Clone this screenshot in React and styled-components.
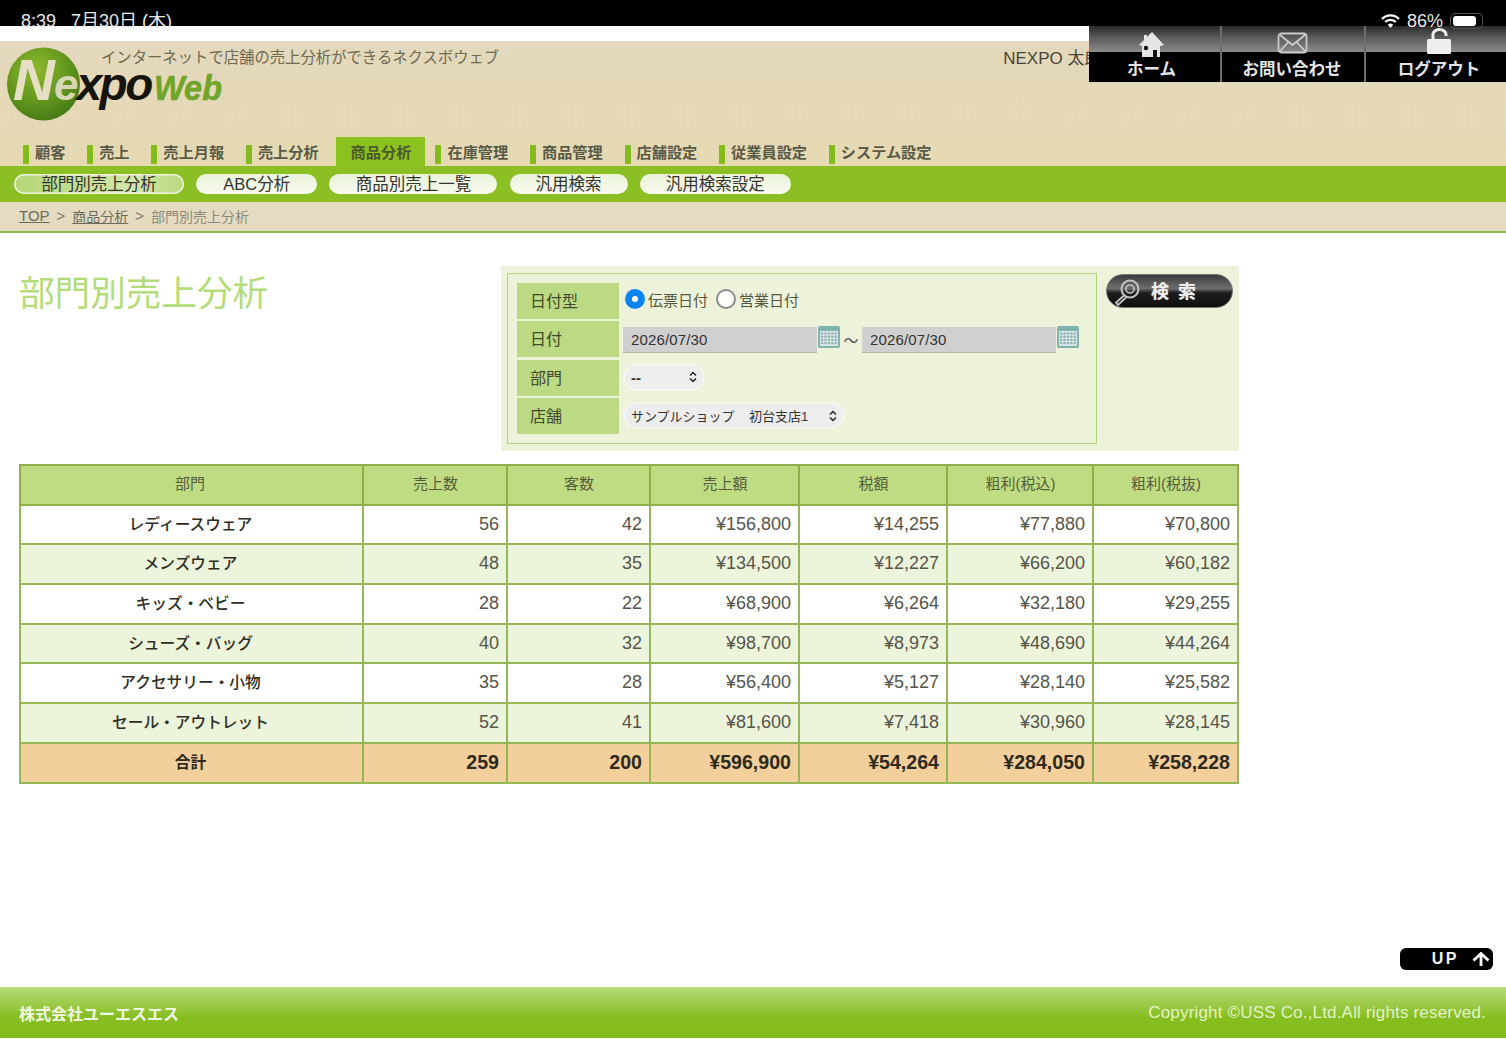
import React from 'react'
import styled, { createGlobalStyle } from 'styled-components'

const GlobalStyle = createGlobalStyle`
html, body {
    margin: 0;
    padding: 0;
    background: #fff;
}
* {
    box-sizing: border-box;
}
body {
    font-family: "Liberation Sans", "Noto Sans CJK JP", sans-serif;
    color: #333;
}
`;

const tabs = ['顧客', '売上', '売上月報', '売上分析', '商品分析', '在庫管理', '商品管理', '店舗設定', '従業員設定', 'システム設定'];
const subTabs = [
    { label: '部門別売上分析', width: 170 },
    { label: 'ABC分析', width: 121 },
    { label: '商品別売上一覧', width: 168 },
    { label: '汎用検索', width: 118 },
    { label: '汎用検索設定', width: 151 },
];
const columns = ['部門', '売上数', '客数', '売上額', '税額', '粗利(税込)', '粗利(税抜)'];
const widths = [343, 144, 143, 149, 148, 146, 145];
const rows = [
    ['レディースウェア', '56', '42', '¥156,800', '¥14,255', '¥77,880', '¥70,800'],
    ['メンズウェア', '48', '35', '¥134,500', '¥12,227', '¥66,200', '¥60,182'],
    ['キッズ・ベビー', '28', '22', '¥68,900', '¥6,264', '¥32,180', '¥29,255'],
    ['シューズ・バッグ', '40', '32', '¥98,700', '¥8,973', '¥48,690', '¥44,264'],
    ['アクセサリー・小物', '35', '28', '¥56,400', '¥5,127', '¥28,140', '¥25,582'],
    ['セール・アウトレット', '52', '41', '¥81,600', '¥7,418', '¥30,960', '¥28,145'],
];
const total = ['合計', '259', '200', '¥596,900', '¥54,264', '¥284,050', '¥258,228'];

const HomeIcon = () => (
    <svg width="27" height="25" viewBox="0 0 27 25">
        <path d="M14 0 L26 13 L23 14 L22 14 L22 25 L4 25 L4 14 L1 13 L6 8 L6 3 L9 3 L9 5 Z" fill="#e6e6e6" />
        <circle cx="8" cy="16" r="2.2" fill="#111" />
        <rect x="15" y="18" width="4" height="7" fill="#111" />
    </svg>
);

const MailIcon = () => (
    <svg width="31" height="22" viewBox="0 0 31 22" fill="none" stroke="#ccc" strokeWidth="1.8">
        <rect x="1.5" y="1.5" width="28" height="19" rx="3" />
        <path d="M3 3 L15.5 13 L28 3 M3 19 L11.5 10 M28 19 L19.5 10" />
    </svg>
);

const LockIcon = () => (
    <svg width="26" height="26" viewBox="0 0 26 26">
        <path d="M7 12 V6.5 A6.5 5 0 0 1 20 6.5 V8" fill="none" stroke="#eee" strokeWidth="3" />
        <rect x="1" y="11" width="24" height="15" rx="1.5" fill="#efefef" />
    </svg>
);

const LensIcon = () => (
    <svg width="26" height="27" viewBox="0 0 26 27" fill="none" stroke="#c4c4c4">
        <circle cx="16" cy="10" r="8.5" strokeWidth="2" />
        <circle cx="16" cy="10" r="4" strokeWidth="1.6" />
        <path d="M10 16.5 L2 23.5 L4 26 L12 18.5" strokeWidth="1.8" />
    </svg>
);

const CalendarIcon = () => (
    <svg width="24" height="24" viewBox="0 0 24 24">
        <rect x="1" y="1" width="22" height="22" rx="2" fill="#7fb3ae" />
        <rect x="3" y="6" width="18" height="15" fill="#d9e6e4" />
        {[0, 1, 2, 3].map((r) =>
            [0, 1, 2, 3, 4].map((c) => (
                <rect key={`${r}-${c}`} x={4 + c * 3.4} y={7.5 + r * 3.2} width="2.2" height="2" fill="#86aeb0" />
            ))
        )}
    </svg>
);

const UpDownIcon = () => (
    <svg width="8" height="12" viewBox="0 0 8 12" fill="none" stroke="#222" strokeWidth="1.5">
        <path d="M1 4.5 L4 1.5 L7 4.5 M1 7.5 L4 10.5 L7 7.5" />
    </svg>
);

const UpArrowIcon = () => (
    <svg width="18" height="14" viewBox="0 0 18 14" fill="none" stroke="#fff" strokeWidth="2.8">
        <path d="M1.5 8.5 L9 1.5 L16.5 8.5 M9 2 V14" />
    </svg>
);

const WifiIcon = () => (
    <svg width="19" height="14" viewBox="0 0 19 14">
        <path d="M1 5 A12 12 0 0 1 18 5" fill="none" stroke="#fff" strokeWidth="2.2" />
        <path d="M4.2 8 A7.5 7.5 0 0 1 14.8 8" fill="none" stroke="#fff" strokeWidth="2.2" />
        <path d="M9.5 14 L6.8 10.8 A4 4 0 0 1 12.2 10.8 Z" fill="#fff" />
    </svg>
);

const Logo = () => (
    <svg width="230" height="80" viewBox="0 0 230 80">
        <defs>
            <radialGradient id="ball" cx="0.4" cy="0.3" r="0.8">
                <stop offset="0" stopColor="#8db92c" />
                <stop offset="0.6" stopColor="#5f921c" />
                <stop offset="1" stopColor="#3f7414" />
            </radialGradient>
        </defs>
        <circle cx="43.5" cy="43" r="36.5" fill="url(#ball)" />
        <text x="13" y="59" fontFamily="Liberation Sans" fontStyle="italic" fontWeight="700">
            <tspan fontSize="58" fill="#e6dfc4">N</tspan>
            <tspan fontSize="44" fill="#d8d6b4" dx="-1">e</tspan>
            <tspan fontSize="46" fill="#15150e" dx="-2" letterSpacing="-2.4">xpo</tspan>
        </text>
        <text x="154" y="59" fontFamily="Liberation Sans" fontStyle="italic" fontWeight="700" fontSize="35" fill="#6fa52a" stroke="#6fa52a" strokeWidth="0.6" textLength="68" lengthAdjust="spacingAndGlyphs">Web</text>
    </svg>
);

const App = () => {
    return (
        <Page>
            <GlobalStyle />
            <StatusBar>
                <span>8:39&nbsp;&nbsp;&nbsp;7月30日 (木)</span>
                <StatusRight>
                    <WifiIcon />
                    <span>86%</span>
                    <Battery><i /></Battery>
                </StatusRight>
            </StatusBar>
            <TopStrip />
            <Header>
                <TopMenu>
                    <MenuItem $w={133} $iconTop={6} $shift={-3}><HomeIcon /><b>ホーム</b></MenuItem>
                    <MenuItem $w={144} $iconTop={6} $shift={-1}><MailIcon /><b>お問い合わせ</b></MenuItem>
                    <MenuItem $w={140} $iconTop={2} $shift={3}><LockIcon /><b>ログアウト</b></MenuItem>
                </TopMenu>
                <Brand>
                    <LogoBox><Logo /></LogoBox>
                    <Tagline>インターネットで店舗の売上分析ができるネクスボウェブ</Tagline>
                    <UserName>NEXPO 太郎</UserName>
                </Brand>
                <Tabs>
                    {tabs.map((tab) => (
                        <Tab key={tab} $active={tab === '商品分析'}>{tab}</Tab>
                    ))}
                </Tabs>
            </Header>
            <SubNav>
                {subTabs.map((tab, index) => (
                    <SubTab key={tab.label} $w={tab.width} $active={index === 0}>{tab.label}</SubTab>
                ))}
            </SubNav>
            <Breadcrumb>
                <a>TOP</a>
                <Sep>&gt;</Sep>
                <a className="small">商品分析</a>
                <Sep>&gt;</Sep>
                <span>部門別売上分析</span>
            </Breadcrumb>
            <Main>
                <TopRow>
                    <Title>部門別売上分析</Title>
                    <SearchPanel>
                        <SearchBox>
                            <FormRow>
                                <FormLabel>日付型</FormLabel>
                                <FormValue>
                                    <Radio $checked />
                                    <RadioText>伝票日付</RadioText>
                                    <Radio />
                                    <RadioText>営業日付</RadioText>
                                </FormValue>
                            </FormRow>
                            <FormRow>
                                <FormLabel>日付</FormLabel>
                                <FormValue>
                                    <DateInput readOnly value="2026/07/30" />
                                    <CalendarBtn><CalendarIcon /></CalendarBtn>
                                    <Tilde>〜</Tilde>
                                    <DateInput readOnly value="2026/07/30" />
                                    <CalendarBtn><CalendarIcon /></CalendarBtn>
                                </FormValue>
                            </FormRow>
                            <FormRow>
                                <FormLabel>部門</FormLabel>
                                <FormValue>
                                    <SelectBox $w={78}><DashText>--</DashText><UpDownIcon /></SelectBox>
                                </FormValue>
                            </FormRow>
                            <FormRow>
                                <FormLabel>店舗</FormLabel>
                                <FormValue>
                                    <SelectBox $w={218}><span>サンプルショップ&nbsp;&nbsp;&nbsp;&nbsp;初台支店1</span><UpDownIcon /></SelectBox>
                                </FormValue>
                            </FormRow>
                        </SearchBox>
                        <SearchButton><LensIcon /><b>検 索</b></SearchButton>
                    </SearchPanel>
                </TopRow>
                <SalesTable>
                    <colgroup>
                        {widths.map((w, i) => <col key={i} style={{ width: w }} />)}
                    </colgroup>
                    <thead>
                        <tr>
                            {columns.map((c) => <Th key={c}>{c}</Th>)}
                        </tr>
                    </thead>
                    <tbody>
                        {rows.map((row, r) => (
                            <Row key={row[0]} $alt={r % 2 === 1}>
                                {row.map((cell, i) => <Td key={i} $name={i === 0}>{cell}</Td>)}
                            </Row>
                        ))}
                        <TotalRow>
                            {total.map((cell, i) => <Td key={i} $name={i === 0}>{cell}</Td>)}
                        </TotalRow>
                    </tbody>
                </SalesTable>
                <UpButton>UP<UpArrowIcon /></UpButton>
            </Main>
            <Footer>
                <Company>株式会社ユーエスエス</Company>
                <Copyright>Copyright ©USS Co.,Ltd.All rights reserved.</Copyright>
            </Footer>
            <BottomGap />
        </Page>
    )
}

const Page = styled.div`
display: flex;
flex-direction: column;
width: 1506px;
height: 1045px;
overflow: hidden;
position: relative;
background: #fff;
`;

const StatusBar = styled.div`
position: relative;
z-index: 3;
height: 26px;
flex: none;
background: #000;
color: #e8e8e8;
font-size: 18px;
line-height: 20px;
padding: 11px 23px 0 21px;
display: flex;
justify-content: space-between;
align-items: flex-start;
overflow: visible;
`;

const StatusRight = styled.div`
display: flex;
align-items: center;
gap: 7px;
height: 20px;
`;

const Battery = styled.div`
width: 33px;
height: 16px;
border: 1px solid #555;
border-radius: 5px;
padding: 2px;
i {
    display: block;
    width: 23px;
    height: 100%;
    background: #fff;
    border-radius: 3px;
}
`;

const TopStrip = styled.div`
height: 15px;
flex: none;
background: #fff;
`;

const Header = styled.div`
position: relative;
height: 125px;
flex: none;
display: flex;
flex-direction: column;
justify-content: space-between;
background:
    repeating-linear-gradient(90deg, rgba(255,255,255,0.02) 0 3px, rgba(120,90,30,0.008) 3px 7px),
    linear-gradient(180deg, #e4d8be 0%, #e6dab2 100%);
`;

const TopMenu = styled.div`
position: absolute;
top: -15px;
right: 0;
z-index: 2;
display: flex;
height: 56px;
background: linear-gradient(180deg, #2a2a2a 0, #5a5a5a 20%, #8a8a8a 46%, #000 47%, #000 100%);
`;

const MenuItem = styled.div`
width: ${(p) => p.$w}px;
display: flex;
flex-direction: column;
align-items: center;
justify-content: space-between;
padding: ${(p) => p.$iconTop}px ${(p) => p.$shift < 0 ? -2 * p.$shift : 0}px 4px ${(p) => p.$shift > 0 ? 2 * p.$shift : 0}px;
border-right: 2px solid #6d6d6d;
&:last-child {
    border-right: none;
}
svg {
    display: block;
}
b {
    color: #e4e4e4;
    font-size: 16.5px;
    line-height: 18px;
    font-weight: 700;
    white-space: nowrap;
}
`;

const Brand = styled.div`
display: flex;
align-items: flex-start;
height: 96px;
`;

const LogoBox = styled.div`
width: 101px;
flex: none;
svg {
    display: block;
    overflow: visible;
}
`;

const Tagline = styled.div`
font-size: 15.35px;
line-height: 20px;
margin-top: 7px;
color: #6e6b50;
white-space: nowrap;
`;

const UserName = styled.div`
margin-left: 504px;
margin-top: 8px;
font-size: 17px;
line-height: 20px;
color: #4a4636;
white-space: nowrap;
`;

const Tabs = styled.div`
display: flex;
align-items: flex-end;
height: 29px;
padding-left: 23px;
`;

const Tab = styled.div`
font-size: 15.2px;
font-weight: 700;
color: #5a5a48;
white-space: nowrap;
${(p) => p.$active ? `
    height: 29px;
    line-height: 32px;
    width: 89px;
    text-align: center;
    background: #8cc21f;
    margin: 0 10px 0 -4px;
    color: #4c5a2c;
` : `
    display: flex;
    align-items: flex-start;
    height: 19px;
    line-height: 15px;
    margin: 0 21.8px 2px 0;
    &::before {
        content: "";
        width: 6px;
        height: 19px;
        background: #84bb1c;
        margin-right: 6px;
    }
`}
`;

const SubNav = styled.div`
height: 36px;
flex: none;
display: flex;
align-items: center;
gap: 12.2px;
padding-left: 14px;
background: #8cbf24;
`;

const SubTab = styled.div`
width: ${(p) => p.$w}px;
height: 20px;
line-height: 20px;
text-align: center;
border-radius: 10px;
font-size: 16.5px;
color: #333;
white-space: nowrap;
background: ${(p) => p.$active
    ? 'linear-gradient(90deg, #b4d676, #d4e6aa 70%, #b9d97e)'
    : 'linear-gradient(180deg, #eaf3d8, #f7faef)'};
box-shadow: ${(p) => p.$active ? 'inset 0 0 0 1.5px #f1f6e2' : 'none'};
`;

const Breadcrumb = styled.div`
height: 31px;
flex: none;
display: flex;
align-items: center;
padding: 0 0 2px 19px;
font-size: 14px;
color: #8b8b80;
background: #e5dbc0;
border-bottom: 2px solid #8cc04a;
a {
    color: #6b6b5c;
    text-decoration: underline;
}
a:first-child {
    font-size: 15px;
}
`;

const Sep = styled.span`
margin: 0 7px;
font-size: 15px;
color: #77776a;
`;

const Main = styled.main`
flex: 1;
min-height: 0;
display: flex;
flex-direction: column;
padding: 33px 13px 17px 19px;
`;

const TopRow = styled.div`
display: flex;
justify-content: space-between;
align-items: flex-start;
width: 1220px;
height: 185px;
margin-bottom: 13px;
`;

const Title = styled.h1`
margin: 5px 0 0;
font-size: 35.6px;
line-height: 46px;
font-weight: 400;
color: #b4dc7a;
white-space: nowrap;
`;

const SearchPanel = styled.div`
width: 738px;
height: 185px;
display: flex;
align-items: flex-start;
padding: 7px 6px;
background: #edf3da;
`;

const SearchBox = styled.div`
width: 590px;
height: 171px;
border: 1px solid #b7d27a;
padding: 9px 9px;
display: flex;
flex-direction: column;
gap: 2.5px;
`;

const FormRow = styled.div`
display: flex;
height: 36.5px;
`;

const FormLabel = styled.div`
width: 102px;
flex: none;
display: flex;
align-items: center;
padding: 0 0 2px 13px;
background: #bcd983;
color: #44492e;
font-size: 16px;
`;

const FormValue = styled.div`
flex: 1;
display: flex;
align-items: center;
padding-left: 4px;
`;

const Radio = styled.span`
width: 20px;
height: 20px;
border-radius: 50%;
flex: none;
margin: -4px 3px 0 ${(p) => p.$checked ? '2px' : '0'};
background: ${(p) => p.$checked ? '#fff' : '#fdfdfa'};
border: ${(p) => p.$checked ? '7px solid #0a84f0' : '2px solid #8b8b8b'};
`;

const RadioText = styled.span`
font-size: 15px;
color: #55583f;
margin: -2px 8px 0 0;
`;

const DateInput = styled.input`
width: 194px;
height: 26px;
margin-top: 2px;
padding: 0 8px 1px;
border: none;
border-bottom: 1px solid #b5b5a8;
border-radius: 0;
outline: none;
background: #d0d0d0;
color: #333;
font-family: "Liberation Sans", sans-serif;
font-size: 15px;
letter-spacing: 0.15px;
`;

const CalendarBtn = styled.span`
display: block;
width: 24px;
height: 24px;
margin-top: -4px;
svg {
    display: block;
}
`;

const Tilde = styled.span`
width: 22px;
margin-left: -1px;
font-size: 15px;
color: #555;
text-align: center;
`;

const SelectBox = styled.div`
width: ${(p) => p.$w}px;
height: 23px;
margin: -1px 0 0 2px;
display: flex;
align-items: center;
justify-content: space-between;
padding: 0 6px;
border-radius: 12px;
background: #ededed;
box-shadow: 0 0 0 1.5px #f8f8f5;
color: #333;
font-size: 13px;
white-space: nowrap;
`;

const DashText = styled.span`
font-size: 15px;
font-weight: 700;
`;

const SearchButton = styled.div`
width: 127px;
height: 34px;
margin: 1px 0 0 9px;
display: flex;
align-items: center;
gap: 11px;
padding-left: 7px;
border-radius: 17px;
border: 1px solid #777;
background: linear-gradient(180deg, #3c3c3c 0, #6e6e6e 42%, #1c1c1c 56%, #101010 100%);
b {
    color: #eee;
    font-size: 18px;
    letter-spacing: 2px;
    white-space: nowrap;
    margin-top: -2px;
    text-shadow: 0 0 1px #aaa;
}
svg {
    display: block;
    flex: none;
    margin-top: 3px;
}
`;

const SalesTable = styled.table`
width: 1219px;
table-layout: fixed;
border-collapse: collapse;
border: 2px solid #8eb04a;
font-size: 18px;
`;

const Th = styled.th`
height: 39.7px;
padding: 0 0 4px 1px;
border: 2px solid #8eb04a;
background: #bfdc82;
color: #565c3c;
font-size: 15px;
font-weight: 400;
text-align: center;
&:first-child {
    padding: 0 3px 4px 0;
}
`;

const Td = styled.td`
height: 39.7px;
padding: ${(p) => p.$name ? '0 2px 3px 0' : '0 7px 1px 0'};
border: 2px solid #96b755;
text-align: ${(p) => p.$name ? 'center' : 'right'};
font-weight: ${(p) => p.$name ? 500 : 400};
font-size: ${(p) => p.$name ? '15.7px' : '18px'};
color: ${(p) => p.$name ? '#2e2e24' : '#55554a'};
`;

const Row = styled.tr`
background: ${(p) => p.$alt ? '#ecf4dc' : '#fff'};
`;

const TotalRow = styled.tr`
background: #f3cf9b;
td {
    font-weight: 700;
    font-size: 19.6px;
    color: #2e2a1c;
}
td:first-child {
    font-size: 15.7px;
}
`;

const UpButton = styled.div`
margin: auto 0 0 auto;
width: 93px;
height: 22px;
display: flex;
align-items: center;
justify-content: flex-end;
gap: 13px;
padding-right: 3px;
border-radius: 6px;
background: #000;
color: #f2f2f2;
font-size: 16px;
font-weight: 700;
letter-spacing: 2.5px;
`;

const Footer = styled.footer`
height: 51px;
flex: none;
display: flex;
align-items: center;
justify-content: space-between;
padding: 0 20px 0 19px;
background: linear-gradient(180deg, #b9dc7c 0, #a2cf56 25%, #86bd20 60%, #84bb1c 100%);
`;

const Company = styled.div`
color: #f1f7e2;
font-size: 16px;
font-weight: 700;
`;

const Copyright = styled.div`
color: #e3f2c8;
font-size: 17px;
letter-spacing: 0.18px;
margin-top: 1px;
`;

const BottomGap = styled.div`
height: 7px;
flex: none;
`;

export default App
